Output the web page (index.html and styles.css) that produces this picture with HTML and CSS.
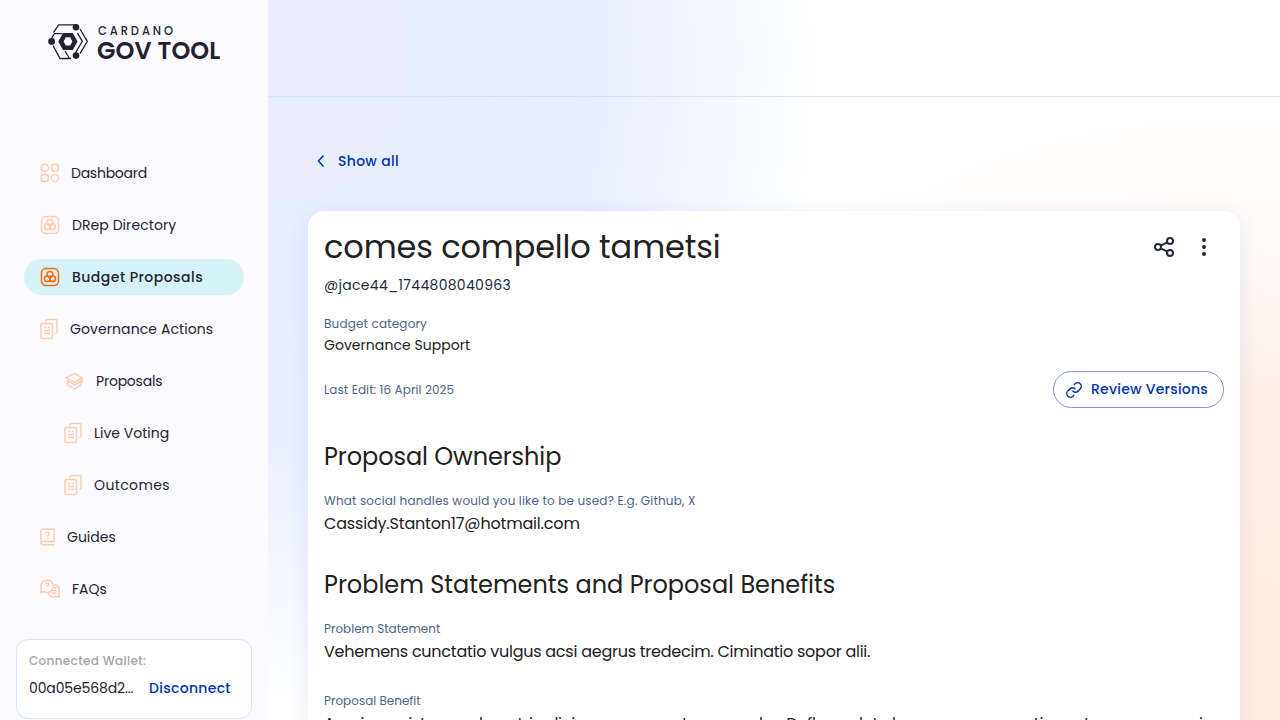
FILE: index.html
```html
<!DOCTYPE html>
<html lang="en">
<head>
<meta charset="utf-8">
<title>Cardano GovTool</title>
<link rel="stylesheet" href="styles.css">
</head>
<body>
<svg class="defs" width="0" height="0" aria-hidden="true">
  <symbol id="rings" viewBox="0 0 20 20"><rect x="1.500" y="1.500" width="17" height="17" rx="4.500"/><circle cx="10" cy="7.300" r="2.900"/><circle cx="7.400" cy="11.700" r="2.900"/><circle cx="12.600" cy="11.700" r="2.900"/></symbol>
  <symbol id="docs" viewBox="0 0 20 22"><path d="M6 4V3.200Q6 1.500 7.700 1.500H15.300Q17 1.500 17 3.200V13.500Q17 15.200 15.300 15.200"/><rect x="1" y="5.500" width="11.500" height="15" rx="2"/><path d="M4 9.500h2.500M8 9.500h2M4 12.500h6M4 15.500h6"/></symbol>
</svg>
<div class="app">
  <aside class="sidebar">
    <div class="logo">
      <svg class="mark" width="41" height="36" viewBox="0 0 41 36"><path fill="none" stroke="#242232" stroke-width="1.300" d="M5.500 8.700 10.500 .800H27M3.700 13.800 6.500 9.700H14.500M32 5 39.300 17.300 32 29.600M29.500 9 34.300 17.300 26.500 30.500M5 21.500 12 34.500H23M17 27 21.500 34.500"/><path fill="#242232" fill-rule="evenodd" d="M15 8.900H24.800L29.500 17.400 24.800 25.900H15L10.300 17.400ZM17.800 13.300 15.600 17.400 17.800 21.500H22.200L24.400 17.400 22.200 13.300Z"/><g fill="#242232"><circle cx="28" cy="3.300" r="3.300"/><circle cx="3.600" cy="17.400" r="3.400"/><circle cx="28" cy="31.600" r="3.300"/></g></svg>
      <div class="brand"><span class="brand-top">CARDANO</span><span class="brand-main">GOV TOOL</span></div>
    </div>
    <nav class="nav">
      <a class="item"><svg width="20" height="20" viewBox="0 0 20 20"><circle cx="4.900" cy="4.900" r="3.600"/><rect x="11.500" y="1.300" width="7" height="7" rx="2.500"/><rect x="1.300" y="11.500" width="7" height="7" rx="2.500"/><circle cx="15" cy="15" r="3.600"/></svg><span class="t-dash">Dashboard</span></a>
      <a class="item"><svg width="20" height="20"><use href="#rings"/></svg><span class="t-drep">DRep Directory</span></a>
      <a class="item active"><svg width="20" height="20"><use href="#rings"/></svg><span class="t-budget">Budget Proposals</span></a>
      <a class="item"><svg width="18" height="22" viewBox="0 0 18 22"><use href="#docs" width="20" height="22"/></svg><span class="t-gov">Governance Actions</span></a>
      <a class="item sub"><svg width="20" height="20" viewBox="0 0 20 20"><path d="M2 6.700 10.500 2.300 18 6.700 10.500 11.300ZM3.500 9.500V14L10.500 17.800 16.500 14V9.500M3.500 9.800 10.500 13.800 16.500 10.500M18 6.700V12.300"/></svg><span class="t-prop">Proposals</span></a>
      <a class="item sub"><svg width="18" height="22" viewBox="0 0 18 22"><use href="#docs" width="20" height="22"/></svg><span class="t-live">Live Voting</span></a>
      <a class="item sub"><svg width="18" height="22" viewBox="0 0 18 22"><use href="#docs" width="20" height="22"/></svg><span class="t-out">Outcomes</span></a>
      <a class="item"><svg width="15" height="18" viewBox="0 0 15 18"><path d="M1 15V3Q1 1.200 2.800 1.200H14V13.500H3Q1 13.500 1 15.100T3 16.700H14.500M5.700 5.700Q5.700 4.200 7.500 4.200T9.300 5.700Q9.300 6.800 7.500 7.700V8.700M7.500 10.300v1"/></svg><span class="t-guides">Guides</span></a>
      <a class="item"><svg width="20" height="20" viewBox="0 0 20 20"><path d="M.800 13.600 1.500 10A6.200 6.200 0 1 1 4 12.700ZM14.300 5.400C18 5.800 20 9.500 18.800 13L19.400 18 15.500 17.400C12.800 18.700 9.700 17.500 8.500 14.600M5.300 5.500Q5.300 4 7 4T8.700 5.500Q8.700 6.500 7 7.300V8M7 9.600v.9M14.500 9H16.700M13 11.700h3.700M11.500 14.300h5.200"/></svg><span class="t-faq">FAQs</span></a>
    </nav>
    <div class="wallet"><div class="wallet-title">Connected Wallet:</div><div class="wallet-row"><span class="address">00a05e568d2...</span><a class="disconnect">Disconnect</a></div></div>
  </aside>
  <main class="main">
    <header class="topbar"></header>
    <a class="back"><svg width="8" height="14" viewBox="0 0 8 14"><path d="M6.500 1.500 1.500 7 6.500 12.500"/></svg><span>Show all</span></a>
    <article class="card">
      <div class="title-row"><h1>comes compello tametsi</h1><div class="actions">
        <svg width="24" height="24" viewBox="0 0 24 24"><g fill="none" stroke="#212a3d" stroke-width="2"><circle cx="18" cy="6" r="3"/><circle cx="6" cy="12" r="3"/><circle cx="18" cy="18" r="3"/><path d="m8.700 10.700 6.600-3.400m-6.600 6 6.600 3.400"/></g></svg>
        <svg width="24" height="24" viewBox="0 0 24 24"><g fill="#212a3d"><circle cx="12" cy="5" r="2"/><circle cx="12" cy="12" r="2"/><circle cx="12" cy="19" r="2"/></g></svg></div></div>
      <p class="author">@jace44_1744808040963</p>
      <p class="label l-cat">Budget category</p><p class="category">Governance Support</p>
      <div class="edit-row"><span class="label l-edit">Last Edit: 16 April 2025</span><button class="versions"><svg width="16" height="16" viewBox="1 1 22 22"><path d="M10 13a5 5 0 0 0 7.540.540l3-3a5 5 0 0 0-7.070-7.070l-1.720 1.710M14 11a5 5 0 0 0-7.540-.540l-3 3a5 5 0 0 0 7.070 7.070l1.710-1.710"/></svg><span>Review Versions</span></button></div>
      <h2 class="h-own">Proposal Ownership</h2>
      <p class="label l-social">What social handles would you like to be used? E.g. Github, X</p><p class="value v-mail">Cassidy.Stanton17@hotmail.com</p>
      <h2 class="h-problem">Problem Statements and Proposal Benefits</h2>
      <p class="label l-problem">Problem Statement</p><p class="value v-problem">Vehemens cunctatio vulgus acsi aegrus tredecim. Ciminatio sopor alii.</p>
      <p class="label l-benefit">Proposal Benefit</p><p class="value v-benefit">Aperio canista venale patris elicio amo nos aeternum urbe. Defluo valeto haero cursum aestimo atavus cum venio</p>
    </article>
  </main>
</div>
</body>
</html>
```
FILE: styles.css
```css
* { box-sizing: border-box; }
body { margin: 0; font-family: Poppins, Inter, "Open Sans", sans-serif; color: #212121; }
.defs { position: absolute; }
h1, h2, p { margin: 0; font-weight: 400; white-space: nowrap; }
.app { display: flex; height: 720px; overflow: hidden; }
.sidebar { width: 268px; flex: none; background: #fbfaff; display: flex; flex-direction: column; }
.logo { display: flex; height: 155px; padding: 24px 0 0 48px; gap: 8px; }
.brand { display: flex; flex-direction: column; color: #242232; white-space: nowrap; }
.brand-top { font-size: 11.500px; line-height: 14px; font-weight: 500; letter-spacing: 2.900px; padding-left: 1px; }
.brand-main { font-size: 24px; line-height: 26px; font-weight: 600; letter-spacing: .1px; }
.nav { display: flex; flex-direction: column; gap: 16px; padding: 0 24px; }
.item { height: 36px; display: flex; align-items: center; padding-left: 16px; border-radius: 18px; font-size: 14px; color: #242232; white-space: nowrap; gap: 12px; }
.item svg { fill: none; stroke: #ffcbad; stroke-width: 1.500; flex: none; }
.item.active { background: #d6f3f7; font-weight: 500; }
.item.active svg { stroke: #ff640a; }
.item.sub { padding-left: 40px; }
.t-dash { letter-spacing: -.25px; margin-left: -1px; }
.t-drep { letter-spacing: .07px; }
.t-budget { letter-spacing: .47px; }
.t-gov { letter-spacing: .09px; }
.t-prop { letter-spacing: -.22px; }
.t-out { letter-spacing: .38px; }
.wallet { margin: 32px 16px 0; height: 80px; border: 1px solid #d6e2ff; border-radius: 12px; background: rgba(255,255,255,.7); padding: 12px; }
.wallet-title { font-size: 12px; line-height: 18px; font-weight: 500; color: #a6a6a6; letter-spacing: .34px; }
.wallet-row { display: flex; line-height: 20px; margin-top: 8px; font-size: 14px; white-space: nowrap; }
.address { width: 120px; color: #242232; letter-spacing: -.13px; }
.disconnect, .back, .versions { color: #0033ad; font-weight: 500; font-size: 14px; letter-spacing: .3px; }
.main {
  flex: 1; min-width: 0;
  background:
    radial-gradient(ellipse 640px 580px at 94% 92%, #ffede3 0%, #ffeee5 42%, rgba(255,246,240,.6) 70%, rgba(255,255,255,0) 100%),
    radial-gradient(ellipse 530px 660px at 3% 8%, #e8eeff 0%, #e8efff 58%, rgba(240,245,255,.85) 76%, rgba(255,255,255,0) 100%),
    #fff;
}
.topbar { height: 97px; border-bottom: 1px solid #d6e2ff; }
.back { display: flex; align-items: center; gap: 13px; margin: 54px 0 0 49px; height: 20px; }
.back svg { stroke: #0033ad; fill: none; stroke-width: 1.500; }
.card { margin: 40px 40px 0; height: 650px; padding: 16px; border-radius: 16px; background: #fff; box-shadow: 0 4px 20px rgba(47,98,220,.12); }
.title-row { display: flex; justify-content: space-between; height: 40px; align-items: center; }
h1 { font-size: 32px; line-height: 40px; letter-spacing: -.13px; }
.actions { display: flex; gap: 16px; padding-right: 8px; }
.author { font-size: 14px; line-height: 20px; margin-top: 8px; color: #212a3d; letter-spacing: .3px; }
.label { font-size: 12px; line-height: 18px; color: #506288; white-space: nowrap; letter-spacing: .17px; }
.l-cat { margin-top: 20px; }
.l-edit { letter-spacing: .1px; }
.category { font-size: 14px; line-height: 20px; margin-top: 2px; letter-spacing: .05px; }
.edit-row { display: flex; justify-content: space-between; align-items: center; height: 37px; margin-top: 16px; }
.versions { font-family: inherit; display: flex; align-items: center; gap: 9px; width: 171px; height: 37px; padding: 0 0 0 12px; background: #fff; border: 1px solid #7c95d8; border-radius: 19px; white-space: nowrap; letter-spacing: .24px; }
.versions svg { fill: none; stroke: #0033ad; stroke-width: 2; flex: none; }
h2 { font-size: 24px; line-height: 32px; margin-top: 33px; letter-spacing: -.07px; }
.l-social, .l-problem { margin-top: 19px; }
.l-problem, .l-benefit { letter-spacing: 0; }
.value { font-size: 16px; line-height: 24px; margin-top: 2px; letter-spacing: -.25px; }
.v-mail { letter-spacing: -.18px; }
h2.h-problem { letter-spacing: -.01px; }
.l-benefit { margin-top: 28px; }
```
